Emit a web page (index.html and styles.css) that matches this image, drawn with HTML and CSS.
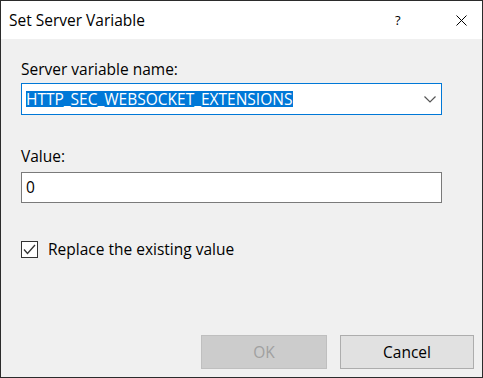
FILE: index.html
```html
<!DOCTYPE html>
<html>
<head>
<meta charset="utf-8">
<link rel="stylesheet" href="styles.css">
</head>
<body>
<div class="window">
  <div class="titlebar">
    <span class="title">Set Server Variable</span>
    <span class="help">?</span>
    <span class="close"><svg width="11" height="11" viewBox="0 0 11 11"><path d="M0.5 0.5L10.5 10.5M10.5 0.5L0.5 10.5" stroke="#000" stroke-width="1"/></svg></span>
  </div>
  <div class="content">
    <div class="label l1">Server variable name:</div>
    <div class="combo">
      <span class="sel">HTTP_SEC_WEBSOCKET_EXTENSIONS</span>
      <svg class="chev" width="12" height="7" viewBox="0 0 12 7"><path d="M0.5 0.5L6 6L11.5 0.5" fill="none" stroke="#555" stroke-width="1.2"/></svg>
    </div>
    <div class="label l2">Value:</div>
    <div class="input">0</div>
    <div class="check-row">
      <span class="box"><svg width="13" height="11" viewBox="0 0 13 11"><path d="M1 5.5L4.5 9.5L12 1" fill="none" stroke="#333" stroke-width="1.3"/></svg></span>
      <span class="check-label">Replace the existing value</span>
    </div>
    <div class="buttons">
      <div class="btn ok">OK</div>
      <div class="btn cancel">Cancel</div>
    </div>
  </div>
</div>
</body>
</html>
```
FILE: styles.css
```css
html, body { margin: 0; padding: 0; }
.window {
  width: 483px; height: 378px; box-sizing: border-box;
  border: 1px solid #2b2b2b;
  background: #f0f0f0;
  display: flex; flex-direction: column;
  font-family: "Open Sans", sans-serif; font-size: 15.5px; color: #000;
}
.titlebar {
  height: 38px; background: #fff; display: flex; align-items: center;
  padding-left: 8px; flex: none;
}
.title { font-size: 15.5px; flex: 1; }
.help { width: 14px; margin-right: 47px; font-size: 13px; }
.close { width: 11px; margin-right: 15px; display: flex; }
.content { flex: 1; display: flex; flex-direction: column; padding: 0 40px 0 20px; }
.label { line-height: 20px; }
.l1 { margin-top: 20px; }
.combo {
  margin-top: 4px; height: 32px; box-sizing: border-box;
  border: 1px solid #0078d7; background: #fff;
  display: flex; align-items: center; padding-left: 4px; padding-right: 5px;
}
.sel {
  background: #0078d7; color: #fff; line-height: 16px; height: 16px;
  padding-right: 1px; flex: none;
}
.chev { margin-left: auto; }
.l2 { margin-top: 31px; }
.input {
  margin-top: 6px; height: 31px; box-sizing: border-box;
  border: 1px solid #7a7a7a; background: #fff; padding-left: 4px;
  line-height: 29px;
}
.check-row { margin-top: 37px; display: flex; align-items: center; height: 18px; }
.box {
  width: 17px; height: 17px; box-sizing: border-box; border: 1px solid #333;
  display: flex; align-items: center; justify-content: center; background: #fff;
}
.check-label { margin-left: 10px; }
.buttons { margin-top: auto; margin-bottom: 8px; display: flex; justify-content: flex-end; gap: 13px; margin-right: -32px; }
.btn {
  height: 34px; box-sizing: border-box; display: flex; align-items: center; justify-content: center;
}
.ok { width: 126px; background: #cccccc; border: 1px solid #bfbfbf; color: #a0a0a0; }
.cancel { width: 134px; background: #e1e1e1; border: 1px solid #adadad; }
```
